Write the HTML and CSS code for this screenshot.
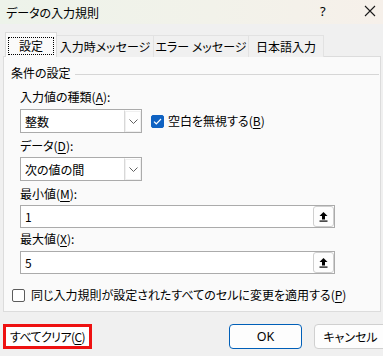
FILE: index.html
```html
<!DOCTYPE html>
<html lang="ja">
<head>
<meta charset="utf-8">
<link rel="stylesheet" href="styles.css">
</head>
<body>
<div class="dialog">
  <div class="titlebar">
    <span class="title">データの入力規則</span>
    <span class="help">?</span>
    <span class="close">
      <svg width="12" height="12" viewBox="0 0 12 12"><path d="M1 1L11 11M11 1L1 11" stroke="#1a1a1a" stroke-width="1.1" fill="none"/></svg>
    </span>
  </div>
  <div class="tabs">
    <div class="tab active"><span class="focus">設定</span></div>
    <div class="tab t2">入力時メッセージ</div>
    <div class="tab t3">エラー メッセージ</div>
    <div class="tab t4">日本語入力</div>
  </div>
  <div class="panel">
    <div class="legend"><span>条件の設定</span><span class="rule"></span></div>
    <div class="field">
      <div class="label l1">入力値の種類(<u>A</u>):</div>
      <div class="row">
        <div class="combo"><span class="val">整数</span><span class="arrow"><svg width="9" height="5" viewBox="0 0 9 5"><path d="M0.5 0.5L4.5 4.5L8.5 0.5" stroke="#606060" fill="none" stroke-width="1"/></svg></span></div>
        <label class="check"><span class="box on"><svg width="9" height="7" viewBox="0 0 9 7"><path d="M1 3.6L3.3 5.8L8 1" stroke="#fff" stroke-width="1.2" fill="none"/></svg></span>空白を無視する(<u>B</u>)</label>
      </div>
      <div class="label l2">データ(<u>D</u>):</div>
      <div class="combo"><span class="val">次の値の間</span><span class="arrow"><svg width="9" height="5" viewBox="0 0 9 5"><path d="M0.5 0.5L4.5 4.5L8.5 0.5" stroke="#606060" fill="none" stroke-width="1"/></svg></span></div>
      <div class="label l3">最小値(<u>M</u>):</div>
      <div class="input"><span class="val">1</span><span class="pick"><svg width="9" height="10" viewBox="0 0 9 10"><path d="M4.5 0L8.5 4H6V7.5H3V4H0.5Z" fill="#000"/><rect x="0.5" y="8.5" width="8" height="1.2" fill="#000"/></svg></span></div>
      <div class="label l4">最大値(<u>X</u>):</div>
      <div class="input"><span class="val">5</span><span class="pick"><svg width="9" height="10" viewBox="0 0 9 10"><path d="M4.5 0L8.5 4H6V7.5H3V4H0.5Z" fill="#000"/><rect x="0.5" y="8.5" width="8" height="1.2" fill="#000"/></svg></span></div>
    </div>
    <label class="check apply"><span class="box"></span>同じ入力規則が設定されたすべてのセルに変更を適用する(<u>P</u>)</label>
  </div>
  <div class="buttons">
    <div class="clear">すべてクリア(<u>C</u>)</div>
    <div class="spacer"></div>
    <div class="btn ok">OK</div>
    <div class="btn cancel">キャンセル</div>
  </div>
</div>
</body>
</html>
```
FILE: styles.css
```css
html, body {
  margin: 0;
  padding: 0;
}
body {
  width: 383px;
  height: 356px;
  overflow: hidden;
  background: #f0f0f0;
  font-family: "Noto Sans CJK JP", "Noto Sans", sans-serif;
  font-size: 12px;
  font-feature-settings: "palt";
  color: #000;
}
.dialog {
  width: 383px;
  height: 356px;
  display: flex;
  flex-direction: column;
}
u {
  text-decoration: underline;
  text-underline-offset: 2px;
}
.titlebar {
  height: 24px;
  display: flex;
  align-items: center;
  padding-left: 6px;
  background: linear-gradient(90deg, #edf3ea 0%, #f2f2ea 55%, #f6f0ea 100%);
}
.title {
  flex: 1;
  line-height: 16px;
  margin-top: 1px;
}
.help {
  width: 12px;
  margin-right: 32px;
  font-family: "Noto Sans", sans-serif;
  font-size: 13px;
  margin-top: -2px;
}
.close {
  width: 12px;
  margin-right: 7px;
  display: flex;
  margin-top: -3px;
}
.tabs {
  display: flex;
  align-items: flex-end;
  margin-top: 9px;
  padding-left: 5px;
  height: 24px;
  margin-bottom: -1px;
  position: relative;
  z-index: 1;
}
.tab {
  box-sizing: border-box;
  height: 22px;
  border: 1px solid #e2e2e2;
  border-bottom: none;
  border-left: none;
  background: #f0f0f0;
  display: flex;
  align-items: center;
  justify-content: center;
  line-height: 16px;
  padding-top: 1px;
  white-space: nowrap;
}
.tab.active {
  width: 52px;
  height: 25px;
  border: 1px solid #dadada;
  border-bottom: none;
  background: #fafafa;
  padding-top: 0;
}
.focus {
  box-sizing: border-box;
  width: 46px;
  height: 18px;
  border: 1px dotted #000;
  display: flex;
  align-items: center;
  justify-content: center;
  margin-top: 1px;
}
.t2 { width: 97px; }
.t3 { width: 95px; }
.t4 { width: 75px; }
.panel {
  box-sizing: border-box;
  margin-left: 3px;
  width: 378px;
  height: 256px;
  border: 1px solid #dcdcdc;
  background: #fafafa;
  padding-top: 8px;
}
.legend {
  display: flex;
  align-items: center;
  padding-left: 7px;
  line-height: 16px;
  height: 16px;
}
.rule {
  flex: 1;
  border-top: 1px solid #d6d6d6;
  margin-left: 4px;
  margin-right: 1px;
  margin-top: 2px;
}
.field {
  padding-left: 16px;
  display: flex;
  flex-direction: column;
  align-items: flex-start;
}
.label {
  line-height: 16px;
}
.l1 { margin-top: 8px; margin-bottom: 4px; }
.l2 { margin-top: 5px; margin-bottom: 3px; }
.l3 { margin-top: 5px; margin-bottom: 3px; }
.l4 { margin-top: 3px; margin-bottom: 4px; }
.row {
  display: flex;
  align-items: center;
}
.combo {
  box-sizing: border-box;
  width: 122px;
  height: 24px;
  border: 1px solid #ababab;
  background: #fff;
  display: flex;
  align-items: stretch;
}
.combo .val, .input .val {
  flex: 1;
  display: flex;
  align-items: center;
  padding-left: 4px;
}
.arrow {
  width: 16px;
  border-left: 1px solid #d8d8d8;
  border-top: 1px solid #fff;
  display: flex;
  align-items: center;
  justify-content: center;
  background: #fff;
  box-shadow: inset 0 0 0 1px #f0f0f0;
}
.check {
  display: flex;
  align-items: center;
  line-height: 16px;
  white-space: nowrap;
}
.row .check {
  margin-left: 9px;
}
.box {
  box-sizing: border-box;
  width: 13px;
  height: 13px;
  border-radius: 2px;
  border: 1px solid #5c5c5c;
  background: #fff;
  margin-right: 4px;
  display: flex;
  align-items: center;
  justify-content: center;
}
.box.on {
  background: #0f62c2;
  border-color: #0f62c2;
}
.input {
  box-sizing: border-box;
  width: 315px;
  height: 23px;
  border: 1px solid #ababab;
  background: #fff;
  display: flex;
  align-items: center;
}
.pick {
  box-sizing: border-box;
  width: 21px;
  height: 21px;
  border: 1px solid #cfcfcf;
  border-radius: 3px;
  background: #fdfdfd;
  display: flex;
  align-items: center;
  justify-content: center;
}
.apply {
  margin-top: 13px;
  margin-left: 8px;
}
.apply .box {
  margin-right: 6px;
}
.buttons {
  display: flex;
  margin-top: 12px;
  padding-left: 3px;
  height: 25px;
}
.clear {
  box-sizing: border-box;
  flex: none;
  width: 89px;
  height: 25px;
  border: 3px solid #ee1111;
  background: #fff;
  display: flex;
  align-items: center;
  padding-left: 4px;
  line-height: 16px;
  white-space: nowrap;
  letter-spacing: -0.6px;
}
.spacer {
  flex: 1;
}
.btn {
  box-sizing: border-box;
  flex: none;
  width: 73px;
  height: 25px;
  border-radius: 4px;
  background: #fdfdfd;
  display: flex;
  align-items: center;
  justify-content: center;
  line-height: 16px;
  white-space: nowrap;
}
.ok {
  border: 1px solid #005fb8;
  font-family: "Noto Sans", sans-serif;
  font-size: 12.5px;
}
.cancel {
  border: 1px solid #d0d0d0;
  margin-left: 12px;
  margin-right: -4px;
}
```
